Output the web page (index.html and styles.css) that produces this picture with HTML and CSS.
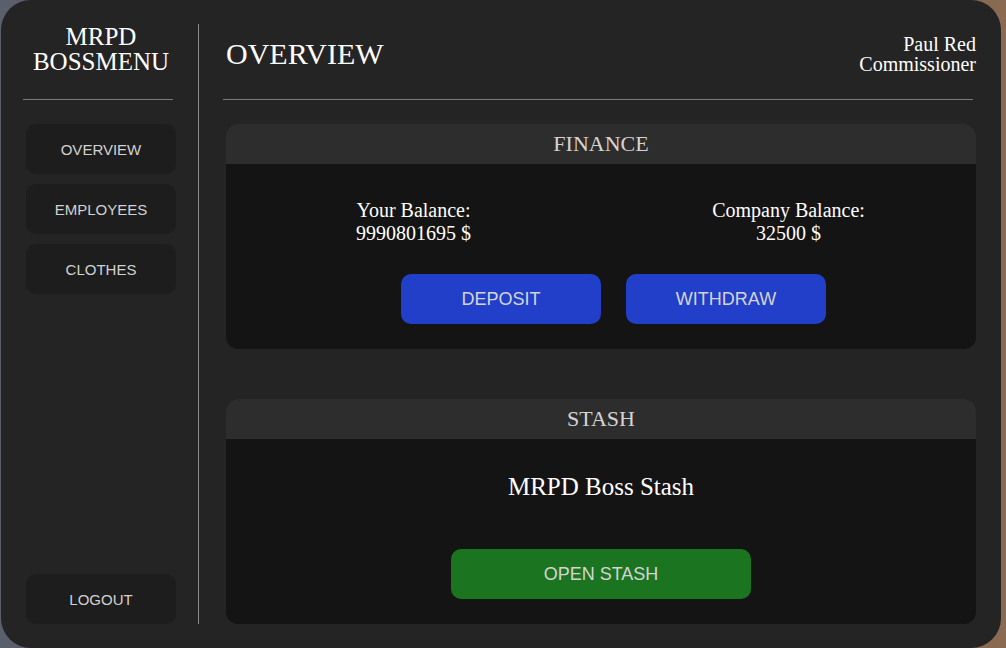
FILE: index.html
```html
<!DOCTYPE html>
<html lang="en">

<head>
    <meta charset="UTF-8">
    <meta name="viewport" content="width=device-width, initial-scale=1.0">
    <title>MRPD Bossmenu</title>
    <link rel="stylesheet" href="styles.css">
</head>

<body>
    <div class="panel">
        <div class="sidebar">
            <div class="logo">MRPD<br>BOSSMENU</div>
            <div class="line side-line"></div>
            <div class="nav">
                <div class="nav-btn">OVERVIEW</div>
                <div class="nav-btn">EMPLOYEES</div>
                <div class="nav-btn">CLOTHES</div>
            </div>
            <div class="nav-btn logout">LOGOUT</div>
        </div>

        <div class="main">
            <div class="header">
                <div class="page-title">OVERVIEW</div>
                <div class="user">Paul Red<br>Commissioner</div>
            </div>
            <div class="line main-line"></div>

            <div class="card">
                <div class="card-title">FINANCE</div>
                <div class="card-body finance">
                    <div class="balances">
                        <div class="balance">Your Balance:<br>9990801695 $</div>
                        <div class="balance">Company Balance:<br>32500 $</div>
                    </div>
                    <div class="actions">
                        <div class="btn blue">DEPOSIT</div>
                        <div class="btn blue">WITHDRAW</div>
                    </div>
                </div>
            </div>

            <div class="card stash">
                <div class="card-title">STASH</div>
                <div class="card-body stash-body">
                    <div class="stash-name">MRPD Boss Stash</div>
                    <div class="btn green">OPEN STASH</div>
                </div>
            </div>
        </div>
    </div>
</body>

</html>
```

FILE: styles.css
```css
* {
    box-sizing: border-box;
}

body {
    margin: 0px;
    padding: 0px;
    width: 100%;
    height: 100vh;
    overflow: hidden;
    background: linear-gradient(90deg, #5a5f6c 0%, #6e5a52 40%, #8a6a50 100%);
    font-family: "Liberation Serif", "Times New Roman", serif;
}

.panel {
    width: 1000px;
    height: 648px;
    margin-left: 1px;
    padding: 24px 0px;
    background-color: #242424;
    border-radius: 30px;
    display: flex;
}

/* sidebar */
.sidebar {
    width: 198px;
    padding: 0px 22px 0px 25px;
    border-right: 1px solid #8a8a8a;
    display: flex;
    flex-direction: column;
}

.logo {
    color: #fff;
    font-size: 25px;
    line-height: 25px;
    text-align: center;
}

.line {
    height: 1px;
    width: 150px;
    background-color: #7a7a7a;
}

.side-line {
    margin: 25px 0px 24px -3px;
}

.nav {
    display: flex;
    flex-direction: column;
    gap: 10px;
}

.nav-btn {
    width: 150px;
    height: 50px;
    background-color: #1d1d1d;
    border-radius: 10px;
    color: #d2d2d2;
    font-family: "Liberation Sans", Arial, sans-serif;
    font-size: 15px;
    display: flex;
    justify-content: center;
    align-items: center;
    cursor: pointer;
}

.logout {
    margin-top: auto;
}

/* main */
.main {
    flex: 1;
    padding: 0px 25px 0px 24px;
}

.header {
    height: 60px;
    padding-left: 3px;
    display: flex;
    justify-content: space-between;
    align-items: center;
}

.page-title {
    color: #fff;
    font-size: 30px;
}

.user {
    color: #fff;
    font-size: 20px;
    line-height: 20px;
    text-align: right;
}

.main-line {
    width: 750px;
    margin: 15px 0px 24px 0px;
}

.card {
    width: 750px;
    margin-left: 3px;
    border-radius: 12px;
    overflow: hidden;
    background-color: #141414;
}

.card.stash {
    margin-top: 50px;
}

.card-title {
    height: 40px;
    background-color: #2d2d2d;
    color: #d4d4d4;
    font-size: 22px;
    display: flex;
    justify-content: center;
    align-items: center;
}

.card-body {
    height: 185px;
}

.finance {
    padding-top: 35px;
}

.balances {
    display: flex;
}

.balance {
    flex: 1;
    color: #fff;
    font-size: 20px;
    text-align: center;
}

.actions {
    margin-top: 29px;
    display: flex;
    justify-content: center;
}

.btn {
    width: 200px;
    height: 50px;
    border-radius: 10px;
    color: #d4d4d4;
    font-family: "Liberation Sans", Arial, sans-serif;
    font-size: 18px;
    display: flex;
    justify-content: center;
    align-items: center;
    cursor: pointer;
}

.blue {
    background-color: #213fc9;
    margin-left: 25px;
}

.green {
    background-color: #1b741f;
    width: 300px;
}

.stash-body {
    padding-top: 34px;
    display: flex;
    flex-direction: column;
    align-items: center;
}

.stash-name {
    color: #fff;
    font-size: 25px;
    margin-bottom: 48px;
}
```
